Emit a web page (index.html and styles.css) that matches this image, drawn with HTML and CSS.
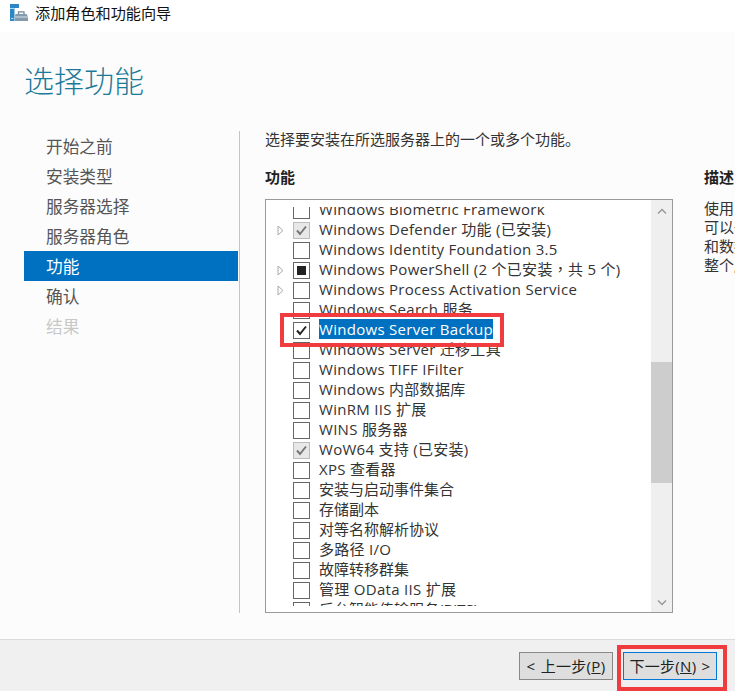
FILE: index.html
```html
<!DOCTYPE html>
<html lang="zh-CN">
<head>
<meta charset="utf-8">
<title>添加角色和功能向导</title>
<link rel="stylesheet" href="styles.css">
</head>
<body>
<div class="wizard">
  <header class="titlebar">
    <svg class="app-icon" width="19" height="18" viewBox="0 0 19 18">
      <path d="M0 0h9v4H4.500v13H0z" fill="#2d87c3"/>
      <path d="M0 4.500h4.500M1 14.500h2.500" stroke="#b4daf0" stroke-width="1"/>
      <path d="M8.500 10V7.800h5.500V10" fill="none" stroke="#73899b" stroke-width="1.300"/>
      <path d="M5.500 10h11l1.500 2.500V17H5v-5z" fill="#849bad"/>
      <path d="M5 13h13" stroke="#d5e0e8"/>
    </svg>
    <span class="title">添加角色和功能向导</span>
  </header>
  <main class="content">
    <h1>选择功能</h1>
    <div class="columns">
      <nav class="steps">
        <div class="step">开始之前</div>
        <div class="step">安装类型</div>
        <div class="step">服务器选择</div>
        <div class="step">服务器角色</div>
        <div class="step current">功能</div>
        <div class="step">确认</div>
        <div class="step disabled">结果</div>
      </nav>
      <section class="picker">
        <p class="intro">选择要安装在所选服务器上的一个或多个功能。</p>
        <h2>功能</h2>
        <div class="listbox">
          <div class="rows">
            <div class="row mixed"><i class="exp"></i><i class="box"></i><span>Windows Biometric Framework</span></div>
            <div class="row mixed"><i class="exp"><svg width="7" height="11"><path d="M1 1l5 4.500L1 10z"/></svg></i><i class="box locked"><svg width="15" height="15"><path d="M3 7.500l3 3.500L12 3.500"/></svg></i><span>Windows Defender 功能 (已安装)</span></div>
            <div class="row mixed"><i class="exp"></i><i class="box"></i><span>Windows Identity Foundation 3.5</span></div>
            <div class="row mixed"><i class="exp"><svg width="7" height="11"><path d="M1 1l5 4.500L1 10z"/></svg></i><i class="box partial"></i><span>Windows PowerShell (2 个已安装<b lang="zh-TW">，</b>共 5 个)</span></div>
            <div class="row mixed"><i class="exp"><svg width="7" height="11"><path d="M1 1l5 4.500L1 10z"/></svg></i><i class="box"></i><span>Windows Process Activation Service</span></div>
            <div class="row mixed"><i class="exp"></i><i class="box"></i><span>Windows Search 服务</span></div>
            <div class="row mixed selected"><i class="exp"></i><i class="box"><svg width="15" height="15"><path d="M3 7.500l3 3.500L12 3.500"/></svg></i><span>Windows Server Backup</span></div>
            <div class="row mixed"><i class="exp"></i><i class="box"></i><span>Windows Server 迁移工具</span></div>
            <div class="row mixed"><i class="exp"></i><i class="box"></i><span>Windows TIFF IFilter</span></div>
            <div class="row mixed"><i class="exp"></i><i class="box"></i><span>Windows 内部数据库</span></div>
            <div class="row mixed"><i class="exp"></i><i class="box"></i><span>WinRM IIS 扩展</span></div>
            <div class="row mixed"><i class="exp"></i><i class="box"></i><span>WINS 服务器</span></div>
            <div class="row mixed"><i class="exp"></i><i class="box locked"><svg width="15" height="15"><path d="M3 7.500l3 3.500L12 3.500"/></svg></i><span>WoW64 支持 (已安装)</span></div>
            <div class="row mixed"><i class="exp"></i><i class="box"></i><span>XPS 查看器</span></div>
            <div class="row"><i class="exp"></i><i class="box"></i><span>安装与启动事件集合</span></div>
            <div class="row"><i class="exp"></i><i class="box"></i><span>存储副本</span></div>
            <div class="row"><i class="exp"></i><i class="box"></i><span>对等名称解析协议</span></div>
            <div class="row mixed"><i class="exp"></i><i class="box"></i><span>多路径 I/O</span></div>
            <div class="row"><i class="exp"></i><i class="box"></i><span>故障转移群集</span></div>
            <div class="row mixed"><i class="exp"></i><i class="box"></i><span>管理 OData IIS 扩展</span></div>
            <div class="row"><i class="exp"></i><i class="box"></i><span>后台智能传输服务(BITS)</span></div>
          </div>
          <div class="scrollbar">
            <svg width="10" height="7"><path d="M1 5.500l4-4 4 4"/></svg>
            <div class="thumb"></div>
            <svg width="10" height="7"><path d="M1 1.500l4 4 4-4"/></svg>
          </div>
          <div class="mark mark-row"></div>
        </div>
      </section>
      <aside class="description">
        <h2>描述</h2>
        <p>使用 <br>可以备<br>和数据<br>整个服</p>
      </aside>
    </div>
  </main>
  <footer class="actions">
    <div class="button">&lt; 上一步(<u>P</u>)</div>
    <div class="button primary">下一步(<u>N</u>) &gt;<div class="mark mark-next"></div></div>
  </footer>
</div>
</body>
</html>
```
FILE: styles.css
```css
* { box-sizing: border-box; }
body {
  margin: 0;
  overflow: hidden;
  font-family: "Open Sans", "Noto Sans CJK SC", sans-serif;
  font-size: 15px;
  color: #333;
}
h1, h2, p { margin: 0; }
.wizard {
  display: flex;
  flex-direction: column;
  width: 735px;
  height: 691px;
  overflow: hidden;
  background: #fcfcfc;
}
.titlebar {
  display: flex;
  height: 32px;
  padding: 3px 0 0 10px;
  gap: 6px;
  background: #fff;
  flex: none;
}
.app-icon { margin-top: 1px; }
.title { font-size: 15.150px; line-height: 20px; color: #111; }
.content { height: 607px; flex: none; }
h1 {
  height: 99px;
  padding: 28px 0 0 24px;
  font-size: 30px;
  line-height: 42px;
  font-weight: 300;
  color: #1c7a99;
}
.columns { display: flex; height: 482px; }
.steps {
  width: 240px;
  flex: none;
  padding-right: 1px;
  padding-left: 24px;
  border-right: 1px solid #c4c4c4;
}
.step {
  height: 30px;
  padding: 1px 0 0 22px;
  font-size: 16.700px;
  line-height: 30px;
  color: #555;
}
.current { background: #0070c0; color: #fff; }
.disabled { color: #c8c8c8; }
.picker { width: 408px; margin-left: 25px; flex: none; }
.intro { height: 36px; line-height: 16px; white-space: nowrap; }
h2 { height: 32px; font-size: 15px; line-height: 20px; white-space: nowrap; color: #222; }
.listbox {
  position: relative;
  display: flex;
  height: 414px;
  border: 1px solid #999;
  background: #fff;
}
.rows { width: 385px; height: 399px; margin-top: 7px; overflow: hidden; }
.row {
  display: flex;
  align-items: center;
  height: 20px;
  line-height: 20px;
  white-space: nowrap;
}
.row:first-child { margin-top: -8px; }
.mixed { letter-spacing: 0.290px; }
.row b { font-family: "Noto Sans CJK TC", sans-serif; font-weight: 400; }
.exp { display: flex; width: 16px; margin: 2px 0 0 11px; }
.exp svg { fill: none; stroke: #aaa; }
.box {
  width: 17px;
  height: 17px;
  margin: 3px 9px 0 0;
  border: 1px solid #666;
  background: #fff;
}
.box svg { display: block; fill: none; stroke: #222; stroke-width: 2; }
.locked { background: #e8e8e8; border-color: #bbb; }
.locked svg { stroke: #777; }
.partial { padding: 3px; background: #222 content-box; }
.selected span { background: #0070c0; color: #fff; }
.scrollbar {
  display: flex;
  flex-direction: column;
  align-items: center;
  width: 21px;
  padding: 8px 0 6px;
  background: #efefef;
}
.scrollbar svg { fill: none; stroke: #999; stroke-width: 1.500; flex: none; }
.thumb { width: 21px; height: 121px; margin: 147px 0 auto; background: #cdcdcd; }
.description { margin-left: 31px; padding-top: 36px; }
.description p { line-height: 19px; white-space: nowrap; }
.mark { position: absolute; border: 4px solid #f03c3f; }
.mark-row { left: 14px; top: 113px; width: 224px; height: 34px; }
.actions {
  display: flex;
  height: 52px;
  padding: 12px 0 0 519px;
  gap: 10px;
  border-top: 1px solid #dcdcdc;
  background: #f0f0f0;
}
.button {
  position: relative;
  width: 94px;
  height: 28px;
  flex: none;
  border: 1px solid #888;
  background: #dedede;
  line-height: 26px;
  letter-spacing: 0.300px;
  word-spacing: 1px;
  text-align: center;
  white-space: nowrap;
  color: #222;
}
.primary { border-color: #0078d7; }
.mark-next { left: -7px; top: -8px; width: 110px; height: 46px; }
```
